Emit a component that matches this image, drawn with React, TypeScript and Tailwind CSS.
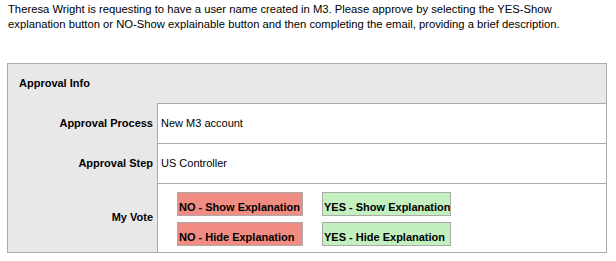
export default function App() {
  const rows = [
    { label: "Approval Process", value: "New M3 account" },
    { label: "Approval Step", value: "US Controller" },
  ]

  const btn = "h-[24px] flex items-end pl-[1px] pb-[1px] leading-[13px] border border-[#aaaaaa] text-left whitespace-nowrap overflow-hidden"

  return (
    <div className="w-[616px] h-[261px] bg-white text-black text-[11px] font-['Liberation_Sans',Arial,sans-serif]">
      <p className="pl-[8px] pt-[2px] leading-[15px] text-[11.25px]">
        Theresa Wright is requesting to have a user name created in M3. Please approve by selecting the YES-Show
        <br />
        explanation button or NO-Show explainable button and then completing the email, providing a brief description.
      </p>

      <div className="ml-[7px] mt-[31px] w-[600px] border border-[#aaaaaa] bg-[#e8e8e8]">
        <div className="h-[39px] pl-[11px] flex items-center font-bold">Approval Info</div>

        {rows.map((row) => (
          <div key={row.label} className="grid grid-cols-[149px_1fr]">
            <div className="h-[40px] flex items-center justify-end pr-[4px] font-bold">{row.label}</div>
            <div className="h-[40px] flex items-center pl-[3px] bg-white border-l border-t border-[#aaaaaa]">
              {row.value}
            </div>
          </div>
        ))}

        <div className="grid grid-cols-[149px_1fr]">
          <div className="h-[69px] flex items-center justify-end pr-[4px] font-bold">My Vote</div>
          <div className="h-[69px] bg-white border-l border-t border-[#aaaaaa] pl-[19px] pt-[8px]">
            <div className="grid grid-cols-[126px_129px] gap-x-[19px] gap-y-[6px] font-bold">
              <button className={`${btn} bg-[#f08c82]`}>NO - Show Explanation</button>
              <button className={`${btn} bg-[#c4f0c0]`}>YES - Show Explanation</button>
              <button className={`${btn} bg-[#f08c82]`}>NO - Hide Explanation</button>
              <button className={`${btn} bg-[#c4f0c0]`}>YES - Hide Explanation</button>
            </div>
          </div>
        </div>
      </div>
    </div>
  )
}
